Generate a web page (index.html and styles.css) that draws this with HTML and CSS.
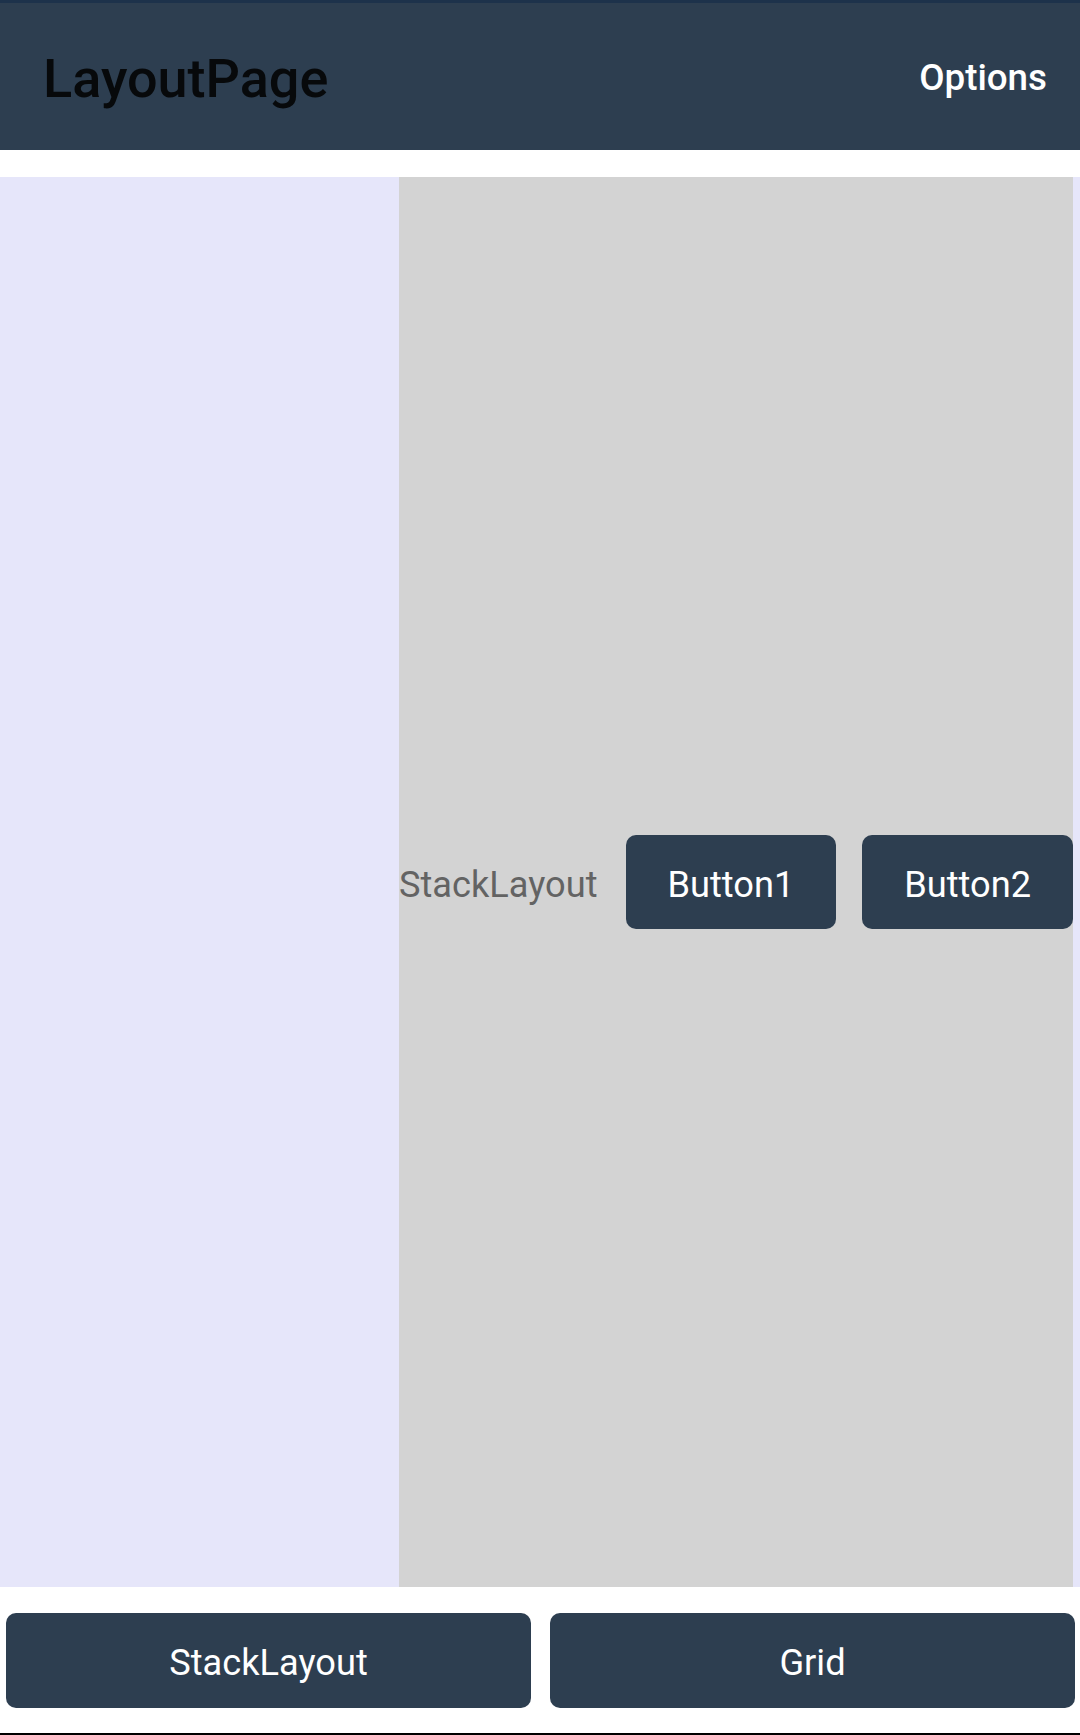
FILE: index.html
```html
<!DOCTYPE html>
<html lang="en">
<head>
<meta charset="utf-8">
<title>LayoutPage</title>
<link rel="stylesheet" href="styles.css">
</head>
<body>
<div class="screen">
  <header class="appbar">
    <h1 class="appbar-title">LayoutPage</h1>
    <span class="appbar-action">Options</span>
  </header>
  <main class="content">
    <div class="side"></div>
    <div class="stack">
      <span class="stack-label">StackLayout</span>
      <button class="btn btn-inline">Button1</button>
      <button class="btn btn-inline">Button2</button>
    </div>
    <div class="edge"></div>
  </main>
  <nav class="bottom">
    <button class="btn btn-bottom">StackLayout</button>
    <button class="btn btn-bottom">Grid</button>
  </nav>
  <div class="baseline"></div>
</div>
</body>
</html>
```
FILE: styles.css
```css
html, body {
  margin: 0;
  padding: 0;
  background: #ffffff;
}
.screen {
  width: 1080px;
  height: 1735px;
  display: flex;
  flex-direction: column;
  font-family: Roboto, "Liberation Sans", sans-serif;
}
.appbar {
  height: 147px;
  border-top: 3px solid #1d324b;
  background: #2d3e50;
  display: flex;
  align-items: center;
  justify-content: space-between;
  padding: 0 33px 0 43px;
  flex: none;
}
.appbar-title {
  margin: 0;
  font-size: 54px;
  font-weight: 500;
  color: #07090b;
  position: relative;
  top: 2px;
}
.appbar-action {
  font-size: 36.75px;
  font-weight: 500;
  color: #ffffff;
  position: relative;
  top: 1px;
}
.content {
  margin-top: 27px;
  height: 1410px;
  background: #e6e6fa;
  display: flex;
  flex: none;
}
.side {
  width: 399px;
  flex: none;
}
.stack {
  width: 674px;
  flex: none;
  background: #d3d3d3;
  display: flex;
  align-items: center;
  justify-content: flex-end;
}
.edge {
  flex: 1;
}
.stack-label {
  font-size: 36.2px;
  color: #636363;
  margin-right: 28px;
  padding-top: 4px;
}
.btn {
  border: none;
  background: #2d3e50;
  color: #ffffff;
  font-family: Roboto, "Liberation Sans", sans-serif;
  font-size: 36.2px;
  border-radius: 10px;
  padding: 4px 0 0 0;
  cursor: pointer;
}
.btn-inline {
  width: 213px;
  height: 94px;
}
.btn-inline + .btn-inline {
  margin-left: 26px;
}
.bottom {
  margin-top: 26px;
  padding: 0 5px 0 6px;
  display: flex;
  gap: 19px;
  flex: none;
}
.btn-bottom {
  flex: 1;
  height: 95px;
}
.baseline {
  margin-top: auto;
  height: 2px;
  background: #000000;
  flex: none;
}
```
